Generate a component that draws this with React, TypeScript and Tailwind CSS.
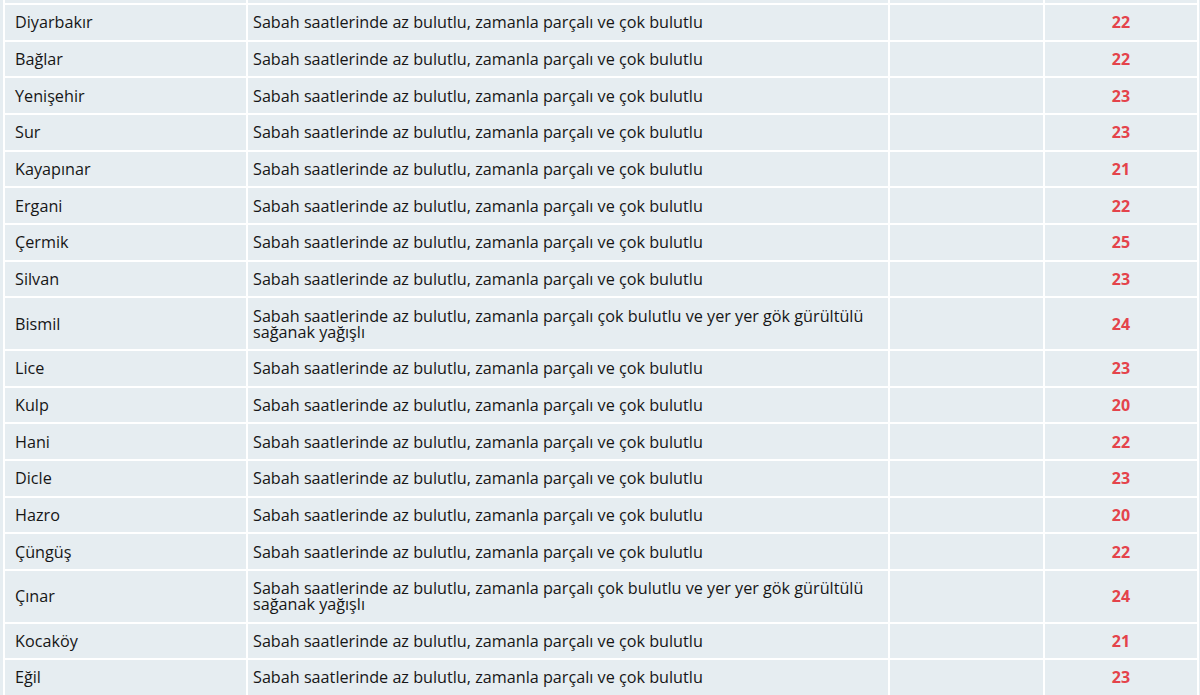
const rows: [string, string, number][] = [
  ["Diyarbakır", "Sabah saatlerinde az bulutlu, zamanla parçalı ve çok bulutlu", 22],
  ["Bağlar", "Sabah saatlerinde az bulutlu, zamanla parçalı ve çok bulutlu", 22],
  ["Yenişehir", "Sabah saatlerinde az bulutlu, zamanla parçalı ve çok bulutlu", 23],
  ["Sur", "Sabah saatlerinde az bulutlu, zamanla parçalı ve çok bulutlu", 23],
  ["Kayapınar", "Sabah saatlerinde az bulutlu, zamanla parçalı ve çok bulutlu", 21],
  ["Ergani", "Sabah saatlerinde az bulutlu, zamanla parçalı ve çok bulutlu", 22],
  ["Çermik", "Sabah saatlerinde az bulutlu, zamanla parçalı ve çok bulutlu", 25],
  ["Silvan", "Sabah saatlerinde az bulutlu, zamanla parçalı ve çok bulutlu", 23],
  ["Bismil", "Sabah saatlerinde az bulutlu, zamanla parçalı çok bulutlu ve yer yer gök gürültülü sağanak yağışlı", 24],
  ["Lice", "Sabah saatlerinde az bulutlu, zamanla parçalı ve çok bulutlu", 23],
  ["Kulp", "Sabah saatlerinde az bulutlu, zamanla parçalı ve çok bulutlu", 20],
  ["Hani", "Sabah saatlerinde az bulutlu, zamanla parçalı ve çok bulutlu", 22],
  ["Dicle", "Sabah saatlerinde az bulutlu, zamanla parçalı ve çok bulutlu", 23],
  ["Hazro", "Sabah saatlerinde az bulutlu, zamanla parçalı ve çok bulutlu", 20],
  ["Çüngüş", "Sabah saatlerinde az bulutlu, zamanla parçalı ve çok bulutlu", 22],
  ["Çınar", "Sabah saatlerinde az bulutlu, zamanla parçalı çok bulutlu ve yer yer gök gürültülü sağanak yağışlı", 24],
  ["Kocaköy", "Sabah saatlerinde az bulutlu, zamanla parçalı ve çok bulutlu", 21],
  ["Eğil", "Sabah saatlerinde az bulutlu, zamanla parçalı ve çok bulutlu", 23],
];

const cell = "bg-[#e6edf1] py-[9.33px] align-middle";

export default function App() {
  return (
    <div
      className="h-[695px] w-[1200px] overflow-hidden bg-[#e6edf1] pl-[3px] text-[16.2px] leading-[16px] text-[#161616]"
      style={{ fontFamily: '"Open Sans", "Noto Sans", sans-serif' }}
    >
      <table className="-mt-[5px] w-[1196px] table-fixed border-separate border-spacing-[2px] bg-white">
        <colgroup>
          <col className="w-[241px]" />
          <col className="w-[640px]" />
          <col className="w-[153px]" />
          <col className="w-[152px]" />
        </colgroup>
        <tbody>
          <tr>
            <td className="h-[6px] bg-[#e6edf1]" />
            <td className="h-[6px] bg-[#e6edf1]" />
            <td className="h-[6px] bg-[#e6edf1]" />
            <td className="h-[6px] bg-[#e6edf1]" />
          </tr>
          {rows.map(([name, desc, temp]) => (
            <tr key={name}>
              <td className={`${cell} px-[10px]`}>{name}</td>
              <td className={`${cell} pl-[5px] pr-[10px]`}>{desc}</td>
              <td className={cell} />
              <td className={`${cell} text-center text-[16px] font-bold text-[#e4434b]`}>{temp}</td>
            </tr>
          ))}
        </tbody>
      </table>
    </div>
  );
}
